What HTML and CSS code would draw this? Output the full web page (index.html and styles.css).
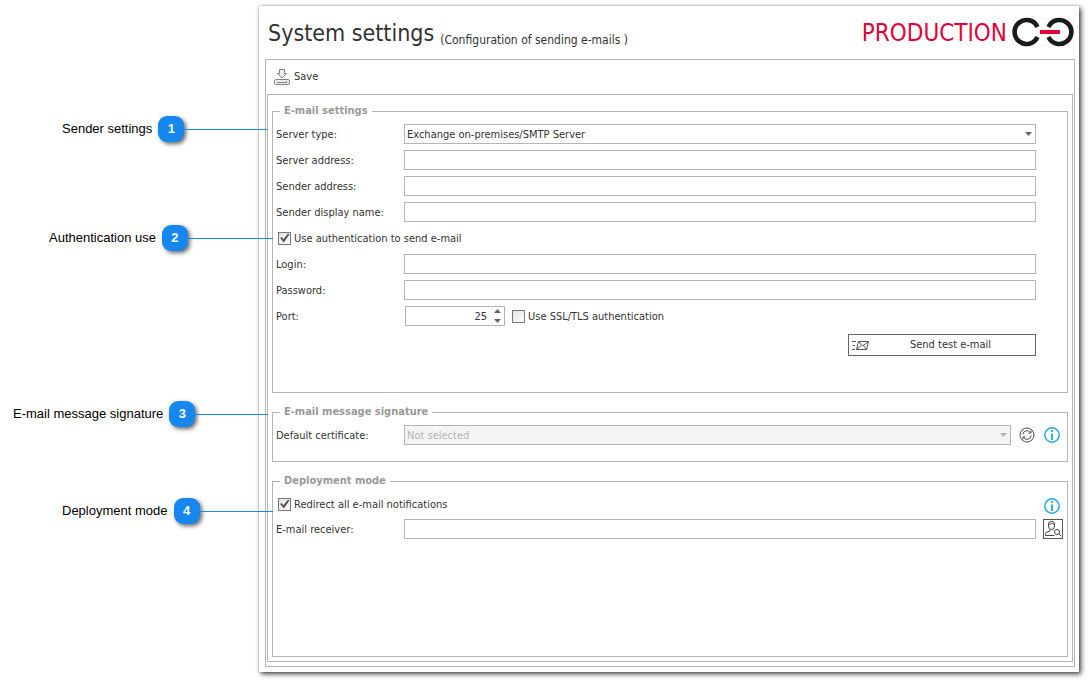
FILE: index.html
```html
<!DOCTYPE html>
<html lang="en">
<head>
<meta charset="utf-8">
<title>System settings</title>
<link rel="stylesheet" href="styles.css">
</head>
<body>
<aside class="callouts">
  <div class="callout callout-sender"><span>Sender settings</span><b class="badge">1</b><i class="lead"></i></div>
  <div class="callout callout-auth"><span>Authentication use</span><b class="badge">2</b><i class="lead"></i></div>
  <div class="callout callout-signature"><span>E-mail message signature</span><b class="badge">3</b><i class="lead"></i></div>
  <div class="callout callout-deploy"><span>Deployment mode</span><b class="badge">4</b><i class="lead"></i></div>
</aside>
<main class="window">
  <header class="header">
    <h1 class="title">System settings</h1>
    <span class="subtitle">(Configuration of sending e-mails )</span>
    <span class="environment">PRODUCTION</span>
    <svg class="logo" viewBox="0 0 62 30" aria-hidden="true">
      <g fill="none" stroke="#1b1b1b" stroke-width="4.600">
        <path d="M25.500 10A12 12 0 1 0 25.500 20"/>
        <path d="M36.500 10A12 12 0 1 1 36.500 20"/>
      </g>
      <path d="M28 13h20v4H28z" fill="#e2003a"/>
    </svg>
  </header>
  <div class="panel">
    <div class="toolbar">
      <button class="save" type="button">
        <svg width="16" height="16" viewBox="0 0 16 16" fill="#eee" stroke="#858585" aria-hidden="true">
          <path d="M5.500.5h5v4h2L8 9 3.500 4.500h2z"/>
          <rect x=".5" y="10.500" width="15" height="5" rx="1.500"/>
          <path d="M3 13.500h10M12 12.500h1" fill="none"/>
        </svg>
        Save
      </button>
    </div>
    <form class="form">
      <fieldset class="group">
        <legend>E-mail settings</legend>
        <div class="row">
          <label for="type">Server type:</label>
          <span class="combo">
            <select id="type"><option>Exchange on-premises/SMTP Server</option></select>
            <svg class="arrow" width="7" height="4" viewBox="0 0 7 4"><path d="M0 0h7L3.500 4z"/></svg>
          </span>
        </div>
        <div class="row"><label for="server">Server address:</label><input class="field" id="server" type="text"></div>
        <div class="row"><label for="sender">Sender address:</label><input class="field" id="sender" type="text"></div>
        <div class="row"><label for="display">Sender display name:</label><input class="field" id="display" type="text"></div>
        <div class="row check-row"><input class="check" id="auth" type="checkbox" checked><label class="check-label" for="auth">Use authentication to send e-mail</label></div>
        <div class="row"><label for="login">Login:</label><input class="field" id="login" type="text"></div>
        <div class="row"><label for="password">Password:</label><input class="field" id="password" type="password"></div>
        <div class="row">
          <label for="port">Port:</label>
          <span class="spin">
            <input id="port" type="number" value="25">
            <svg class="spin-arrows" width="7" height="14" viewBox="0 0 7 14"><path d="M0 4h7L3.500 0zM0 10h7L3.500 14z"/></svg>
          </span>
          <input class="check" id="ssl" type="checkbox"><label class="check-label" for="ssl">Use SSL/TLS authentication</label>
        </div>
        <div class="actions">
          <button class="send" type="button">
            <svg width="17" height="9" viewBox="0 0 17 9" fill="none" stroke="#555" aria-hidden="true">
              <path d="M0 .5h4M1 4.500h2M0 8.500h3M6.500.5h10l-2 8h-10zM6.500.5l4 4.500 6-4.500M4.500 8.500l4.500-4M14.500 8.500l-3-4"/>
            </svg>
            <span>Send test e-mail</span>
          </button>
        </div>
      </fieldset>
      <fieldset class="group group-signature">
        <legend>E-mail message signature</legend>
        <div class="row">
          <label for="certificate">Default certificate:</label>
          <span class="combo">
            <select id="certificate" disabled><option>Not selected</option></select>
            <svg class="arrow" width="7" height="4" viewBox="0 0 7 4"><path d="M0 0h7L3.500 4z"/></svg>
          </span>
          <button class="icon-button" type="button" aria-label="Refresh">
            <svg width="16" height="16" viewBox="0 0 16 16" fill="none" stroke="#4a4a4a" aria-hidden="true">
              <circle cx="8" cy="8" r="7"/>
              <path d="M3.800 7.500A4.200 4.200 0 0 1 11.500 5.600M12.200 8.500A4.200 4.200 0 0 1 4.500 10.400M12 3.600v2.500H9.500M4 12.400V9.900h2.500"/>
            </svg>
          </button>
          <button class="icon-button" type="button" aria-label="Certificate information">
            <svg width="16" height="16" viewBox="0 0 16 16" fill="none" stroke="#1ba6e6" aria-hidden="true">
              <circle cx="8" cy="8" r="7.200" stroke-width="1.400"/><path d="M8 3v2M8 6.500V13" stroke-width="1.800"/>
            </svg>
          </button>
        </div>
      </fieldset>
      <fieldset class="group group-deploy">
        <legend>Deployment mode</legend>
        <div class="row check-row">
          <input class="check" id="redirect" type="checkbox" checked><label class="check-label" for="redirect">Redirect all e-mail notifications</label>
          <button class="icon-button info-end" type="button" aria-label="Redirect information">
            <svg width="16" height="16" viewBox="0 0 16 16" fill="none" stroke="#1ba6e6" aria-hidden="true">
              <circle cx="8" cy="8" r="7.200" stroke-width="1.400"/><path d="M8 3v2M8 6.500V13" stroke-width="1.800"/>
            </svg>
          </button>
        </div>
        <div class="row">
          <label for="receiver">E-mail receiver:</label><input class="field" id="receiver" type="text">
          <button class="pick" type="button" aria-label="Select receiver">
            <svg width="18" height="18" viewBox="0 0 18 18" fill="none" stroke="#444" aria-hidden="true">
              <path d="M4.500 3.500Q4.500 1.500 7.500 1.500T10.500 3.500V6Q10.500 9.500 7.500 9.500T4.500 6zM4.500 4.500Q8 3.500 8.500 3.500L10.500 4.500M6 9.500v1.500L2 12.500q-.500.500-.500 3h9M9 9.500v1"/>
              <circle cx="13" cy="12" r="2.500"/><path d="M14.800 13.800l2.400 2.400"/>
            </svg>
          </button>
        </div>
      </fieldset>
    </form>
  </div>
</main>
</body>
</html>
```
FILE: styles.css
```css
* { box-sizing: border-box; }

body {
  display: flex;
  min-height: 100vh;
  margin: 0;
  padding: 6px 10px 10px 0;
  background: #fff;
  color: #333;
  font: 11px/14px "DejaVu Sans Condensed", "Noto Sans", sans-serif;
}

input, select, button { font: inherit; color: inherit; margin: 0; }
button { padding: 0; border: 0; background: none; }
svg { display: block; flex: none; }

.callouts {
  position: relative;
  z-index: 1;
  flex: none;
  width: 259px;
  padding-top: 109px;
  color: #000;
  font: 13px/28px "Liberation Sans", Arial, sans-serif;
}
.callout { display: flex; align-items: center; white-space: nowrap; }
.callout-sender { width: 267px; padding-left: 62px; }
.callout-auth { width: 273px; padding-left: 49px; margin-top: 81px; }
.callout-signature { width: 268px; padding-left: 13px; margin-top: 148px; }
.callout-deploy { width: 273px; padding-left: 62px; margin-top: 69px; }
.badge {
  flex: none;
  width: 26px;
  height: 26px;
  margin-left: 6px;
  border-radius: 9px;
  background: #1687ee;
  box-shadow: 2px 2px 4px rgba(0, 0, 0, .6);
  color: #fff;
  line-height: 26px;
  text-align: center;
}
.lead { align-self: flex-start; flex: 1; height: 1px; margin-top: 14px; background: #1687ee; }

.window {
  display: flex;
  flex: 1;
  flex-direction: column;
  min-width: 0;
  padding: 0 4px 5px 6px;
  background: #fff;
  box-shadow: 2px 2px 5px rgba(0, 0, 0, .75), 0 0 2px rgba(0, 0, 0, .25);
}
.header {
  display: flex;
  align-items: flex-start;
  height: 53px;
  padding: 10px 1px 0 3px;
  white-space: nowrap;
}
.title { margin: 0; font-size: 23px; font-weight: 400; line-height: 34px; }
.subtitle { margin: 16px 0 0 6px; font-size: 12px; line-height: 16px; }
.environment {
  margin-left: auto;
  color: #e2003a;
  font-size: 24px;
  line-height: 34px;
}
.logo { width: 62px; height: 30px; margin: 1px 0 0 5px; }

.panel {
  display: flex;
  flex: 1;
  flex-direction: column;
  padding: 0 1px 4px;
  border: 1px solid #b5b5b5;
}
.toolbar { display: flex; align-items: center; height: 34px; padding-left: 7px; }
.save { display: flex; align-items: center; gap: 4px; }
.form {
  display: flex;
  flex: 1;
  flex-direction: column;
  gap: 12px;
  padding: 9px 4px 4px;
  border: 1px solid #b5b5b5;
}

.group {
  display: flex;
  flex-direction: column;
  gap: 6px;
  min-width: 0;
  margin: 0;
  padding: 6px 31px 36px 3px;
  border: 1px solid #b5b5b5;
}
.group-signature { padding: 6px 7px 16px 3px; }
.group-deploy { flex: 1; gap: 5px; padding: 6px 4px 16px 3px; }
legend { margin-left: 4px; padding: 0 4px; color: #999; font-weight: 700; }

.row { display: flex; align-items: center; height: 20px; white-space: nowrap; }
.row label { padding-top: 2px; }
.row > label:first-child { flex: none; width: 128px; }
.check-row { padding-left: 2px; }

.field, .combo, .spin input { height: 20px; border: 1px solid #b5b5b5; background: #fff; }
.field, .combo { flex: 1; min-width: 0; }
.combo { position: relative; display: flex; }
.combo select {
  appearance: none;
  width: 100%;
  padding: 1px 16px 0 2px;
  border: 0;
  background: none;
}
.combo select:disabled { background: #f4f4f4; color: #b5b5b5; opacity: 1; }
.arrow { position: absolute; top: 7px; right: 3px; fill: #666; }
select:disabled + .arrow { fill: #b5b5b5; }

.spin { position: relative; margin: 0 7px 0 1px; }
.spin input { width: 100px; padding: 0 17px 0 0; text-align: right; appearance: textfield; }
.spin input::-webkit-inner-spin-button { display: none; }
.spin-arrows { position: absolute; top: 3px; right: 4px; fill: #666; }

.check {
  appearance: none;
  flex: none;
  width: 13px;
  height: 13px;
  border: 1px solid #777;
  background: linear-gradient(135deg, #e2e2e2, #fff);
}
.check:checked::before {
  content: "";
  display: block;
  width: 11px;
  height: 11px;
  background: #555;
  clip-path: polygon(10% 50%, 24% 42%, 40% 62%, 82% 10%, 95% 18%, 44% 92%);
}
.check-label { margin-left: 3px; }

.actions { display: flex; justify-content: flex-end; margin-top: 2px; }
.send {
  display: flex;
  align-items: center;
  width: 188px;
  height: 22px;
  padding: 0 3px;
  border: 1px solid #666;
}
.send span { flex: 1; }

.icon-button { flex: none; margin-left: 8px; }
.icon-button + .icon-button { margin-left: 9px; }
.info-end { margin: 4px 3px 0 auto; }
.pick {
  flex: none;
  width: 20px;
  height: 20px;
  margin-left: 7px;
  border: 1px solid #555;
}
```
